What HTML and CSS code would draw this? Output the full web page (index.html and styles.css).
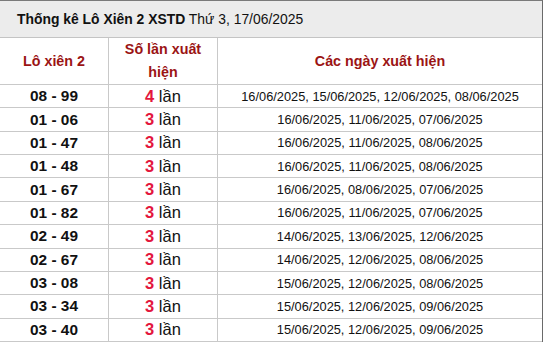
FILE: index.html
```html
<!DOCTYPE html>
<html lang="vi">
<head>
<meta charset="utf-8">
<title>Thống kê Lô Xiên 2 XSTD</title>
<link rel="stylesheet" href="styles.css">
</head>
<body>
<div class="box">
  <div class="title"><b>Thống kê Lô Xiên 2 XSTD</b> Thứ 3, 17/06/2025</div>
  <div class="grid">
    <div class="cell head">Lô xiên 2</div>
    <div class="cell head">Số lần xuất hiện</div>
    <div class="cell head">Các ngày xuất hiện</div>

    <div class="cell pair">08 - 99</div>
    <div class="cell count"><span><b>4</b> lần</span></div>
    <div class="cell dates">16/06/2025, 15/06/2025, 12/06/2025, 08/06/2025</div>

    <div class="cell pair">01 - 06</div>
    <div class="cell count"><span><b>3</b> lần</span></div>
    <div class="cell dates">16/06/2025, 11/06/2025, 07/06/2025</div>

    <div class="cell pair">01 - 47</div>
    <div class="cell count"><span><b>3</b> lần</span></div>
    <div class="cell dates">16/06/2025, 11/06/2025, 08/06/2025</div>

    <div class="cell pair">01 - 48</div>
    <div class="cell count"><span><b>3</b> lần</span></div>
    <div class="cell dates">16/06/2025, 11/06/2025, 08/06/2025</div>

    <div class="cell pair">01 - 67</div>
    <div class="cell count"><span><b>3</b> lần</span></div>
    <div class="cell dates">16/06/2025, 08/06/2025, 07/06/2025</div>

    <div class="cell pair">01 - 82</div>
    <div class="cell count"><span><b>3</b> lần</span></div>
    <div class="cell dates">16/06/2025, 11/06/2025, 07/06/2025</div>

    <div class="cell pair">02 - 49</div>
    <div class="cell count"><span><b>3</b> lần</span></div>
    <div class="cell dates">14/06/2025, 13/06/2025, 12/06/2025</div>

    <div class="cell pair">02 - 67</div>
    <div class="cell count"><span><b>3</b> lần</span></div>
    <div class="cell dates">14/06/2025, 12/06/2025, 08/06/2025</div>

    <div class="cell pair">03 - 08</div>
    <div class="cell count"><span><b>3</b> lần</span></div>
    <div class="cell dates">15/06/2025, 12/06/2025, 08/06/2025</div>

    <div class="cell pair">03 - 34</div>
    <div class="cell count"><span><b>3</b> lần</span></div>
    <div class="cell dates">15/06/2025, 12/06/2025, 09/06/2025</div>

    <div class="cell pair">03 - 40</div>
    <div class="cell count"><span><b>3</b> lần</span></div>
    <div class="cell dates">15/06/2025, 12/06/2025, 09/06/2025</div>
  </div>
</div>
</body>
</html>
```
FILE: styles.css
```css
html, body {
  margin: 0;
  padding: 0;
  background: #fff;
}
body {
  font-family: "Liberation Sans", Arial, sans-serif;
  color: #111;
}
.box {
  width: 542px;
  border-top: 1px solid #7a7a7a;
  border-right: 1px solid #6a6a6a;
}
.title {
  height: 36px;
  line-height: 36px;
  padding-left: 17px;
  background: #ececec;
  border-bottom: 1px solid #c4c4c4;
  font-size: 13.9px;
  color: #111;
  white-space: nowrap;
}
.grid {
  display: grid;
  grid-template-columns: 108px 108px 324px;
  grid-template-rows: 46px repeat(11, 22.36px);
  gap: 1px;
  background: #c9c9c9;
  border-bottom: 1px solid #c9c9c9;
}
.cell {
  background: #fff;
  display: flex;
  align-items: center;
  justify-content: center;
  text-align: center;
  white-space: nowrap;
}
.head {
  white-space: normal;
  padding: 0 10px;
  font-size: 14.3px;
  font-weight: bold;
  line-height: 23px;
  color: #9b1414;
}
.pair {
  font-size: 15.4px;
  font-weight: bold;
  color: #111;
}
.count {
  font-size: 16.5px;
  color: #111;
}
.count b {
  color: #e3163d;
}
.dates {
  font-size: 12.8px;
  color: #111;
}
```
